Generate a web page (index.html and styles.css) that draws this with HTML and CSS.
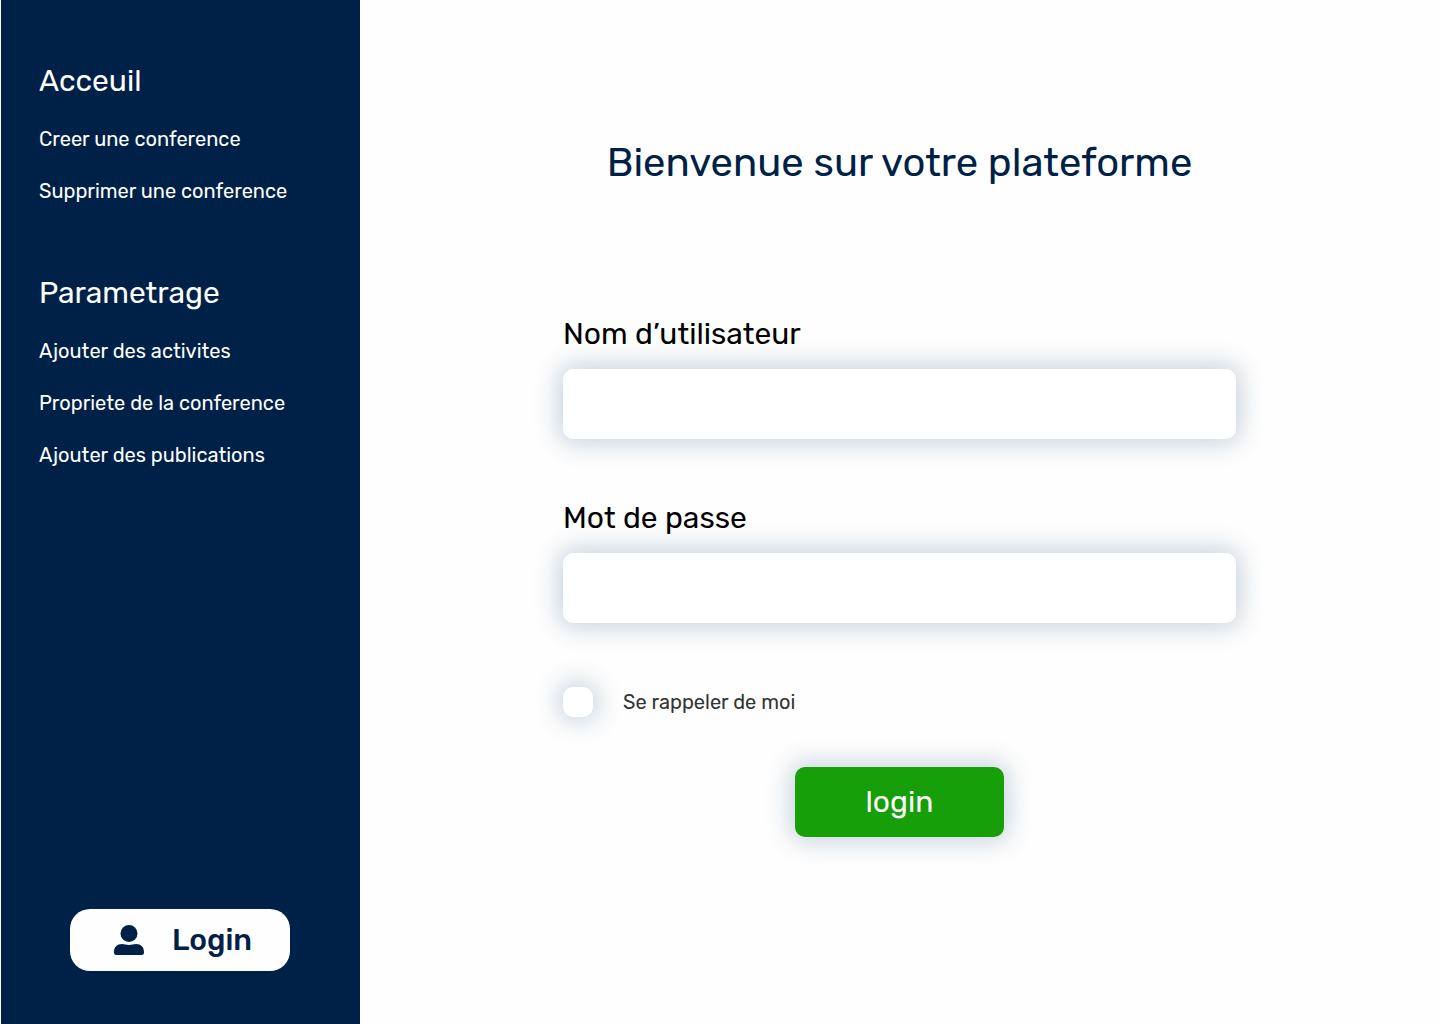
FILE: index.html
```html
<!DOCTYPE html>
<html lang="fr">
<head>
  <meta charset="utf-8">
  <meta name="viewport" content="width=device-width, initial-scale=1">
  <title>Connexion</title>
  <link rel="stylesheet" href="styles.css">
</head>
<body>
  <div class="layout">
    <aside class="sidebar">
      <nav class="menu">
        <section class="menu-group">
          <h2 class="menu-title">Acceuil</h2>
          <a class="menu-link" href="#creer">Creer une conference</a>
          <a class="menu-link" href="#supprimer">Supprimer une conference</a>
        </section>
        <section class="menu-group">
          <h2 class="menu-title">Parametrage</h2>
          <a class="menu-link" href="#activites">Ajouter des activites</a>
          <a class="menu-link" href="#propriete">Propriete de la conference</a>
          <a class="menu-link" href="#publications">Ajouter des publications</a>
        </section>
      </nav>
      <button class="account" type="button">
        <svg class="account-icon" viewBox="0 0 30 30" aria-hidden="true">
          <circle cx="15" cy="8.500" r="8.500"/>
          <path d="M8 19C10.500 19 12 20 15 20S19.500 19 22 19C27 19 30 22 30 27V27.500Q30 30 27.500 30H2.500Q0 30 0 27.500V27C0 22 3 19 8 19Z"/>
        </svg>
        <span>Login</span>
      </button>
    </aside>
    <main class="content">
      <h1 class="welcome">Bienvenue sur votre plateforme</h1>
      <form class="login-form">
        <div class="field">
          <label class="field-label" for="username">Nom d’utilisateur</label>
          <input class="field-input" id="username" type="text">
        </div>
        <div class="field">
          <label class="field-label" for="password">Mot de passe</label>
          <input class="field-input" id="password" type="password">
        </div>
        <div class="remember">
          <input class="remember-box" id="remember" type="checkbox">
          <label class="remember-label" for="remember">Se rappeler de moi</label>
        </div>
        <button class="submit" type="submit">login</button>
      </form>
    </main>
  </div>
</body>
</html>
```
FILE: styles.css
```css
:root {
  --navy: #002147;
  --glow: 0 0 24px 5px rgba(0, 56, 98, 0.21);
}

* {
  box-sizing: border-box;
}

body {
  margin: 0;
  background: #fefefe;
  font-family: Rubik, Roboto, sans-serif;
  color: #000;
}

h1,
h2 {
  margin: 0;
  font-weight: 400;
}

button,
input {
  border: 0;
  font: inherit;
}

.layout {
  display: grid;
  grid-template-columns: 25% 1fr;
  min-height: 100vh;
}

.sidebar {
  display: flex;
  flex-direction: column;
  justify-content: space-between;
  gap: 48px;
  border-left: 1px solid #fefefe;
  padding: 63px 39px 53px 38px;
  background: var(--navy);
  color: #fefefe;
}

.menu {
  display: flex;
  flex-direction: column;
  gap: 72px;
}

.menu-group {
  display: flex;
  flex-direction: column;
  align-items: flex-start;
  gap: 28px;
}

.menu-title {
  font-size: 30px;
  line-height: 36px;
}

.menu-link {
  font-size: 20px;
  line-height: 24px;
  color: inherit;
  text-decoration: none;
}

.account {
  display: flex;
  align-items: center;
  align-self: center;
  gap: 28px;
  width: 220px;
  height: 62px;
  padding: 0 0 0 44px;
  border-radius: 20px;
  background: #fefefe;
  color: var(--navy);
  font-size: 30px;
  font-weight: 500;
}

.account-icon {
  width: 30px;
  height: 30px;
  fill: currentColor;
}

.content {
  display: flex;
  flex-direction: column;
  align-items: center;
  gap: 129px;
  padding: 139px 25px 48px 24px;
}

.welcome {
  font-size: 40px;
  line-height: 48px;
  color: var(--navy);
  text-align: center;
}

.login-form {
  display: flex;
  flex-direction: column;
  width: 100%;
  max-width: 673px;
}

.field {
  display: flex;
  flex-direction: column;
  gap: 17px;
  margin-bottom: 61px;
}

.field-label {
  font-size: 30px;
  line-height: 36px;
}

.field-input {
  width: 100%;
  height: 70px;
  padding: 0 20px;
  border-radius: 10px;
  background: #fff;
  box-shadow: var(--glow);
  font-size: 20px;
}

.remember {
  display: flex;
  align-items: center;
  gap: 30px;
  margin-top: 3px;
  margin-bottom: 50px;
}

.remember-box {
  appearance: none;
  width: 30px;
  height: 30px;
  margin: 0;
  border-radius: 10px;
  background: #fff;
  box-shadow: var(--glow);
}

.remember-box:checked {
  background: var(--navy);
}

.remember-label {
  font-size: 20px;
  line-height: 24px;
  color: #333;
}

.submit {
  align-self: center;
  width: 209px;
  height: 70px;
  border-radius: 10px;
  background: #169f09;
  box-shadow: var(--glow);
  color: #fefefe;
  font-size: 30px;
}
```
